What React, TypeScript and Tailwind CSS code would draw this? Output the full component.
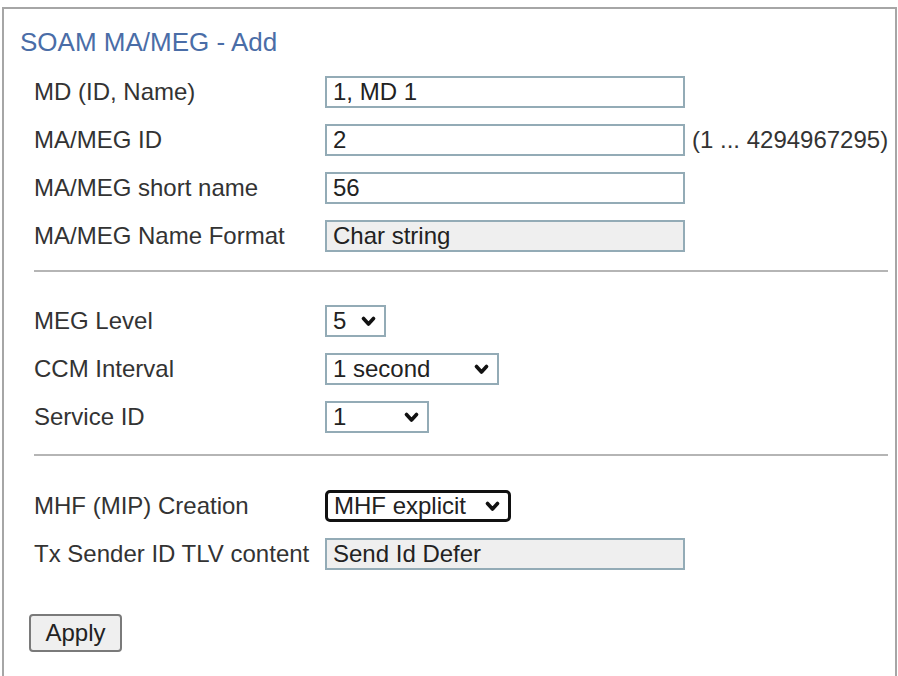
const font = { fontFamily: '"Liberation Sans", Arial, sans-serif' }

function Chevron() {
  return (
    <svg width="15" height="11" viewBox="0 0 15 11" className="shrink-0">
      <polyline points="2.5,2.5 7.5,8 12.5,2.5" fill="none" stroke="#111" strokeWidth="3.6" strokeLinecap="round" strokeLinejoin="round" />
    </svg>
  )
}

function TextBox({ value, disabled }: { value: string; disabled?: boolean }) {
  return (
    <div
      className={`flex h-[32px] w-[360px] shrink-0 items-center border-2 border-[#93abb6] px-[6px] text-[24px] leading-none text-[#222] ${disabled ? "bg-[#efefef]" : "bg-white"}`}
    >
      {value}
    </div>
  )
}

function Select({ value, width, focused }: { value: string; width: string; focused?: boolean }) {
  return (
    <div
      className={`flex h-[32px] items-center justify-between bg-white pl-[6px] pr-[8px] text-[24px] leading-none text-[#222] ${width} ${focused ? "rounded-[5px] border-[3px] border-[#111]" : "border-2 border-[#93abb6]"}`}
    >
      <span className="whitespace-nowrap">{value}</span>
      <Chevron />
    </div>
  )
}

function Row({ label, children }: { label: string; children: React.ReactNode }) {
  return (
    <div className="flex h-[48px] items-center">
      <div className="w-[291px] shrink-0 whitespace-nowrap text-[24px] leading-none text-[#333]">{label}</div>
      {children}
    </div>
  )
}

export default function App() {
  return (
    <div className="h-[676px] w-[898px] overflow-hidden bg-white pl-[2px] pr-[1px] pt-[7px]" style={font}>
      <div className="h-[700px] border-2 border-b-0 border-[#a6a6a6] pl-[30px] pr-[6px]">
        {/* Title */}
        <div className="-ml-[14px] mt-[16px] h-[34px] text-[26px] leading-[34px] text-[#4a6da7]">SOAM MA/MEG - Add</div>

        <div className="mt-[9px]">
          <Row label="MD (ID, Name)">
            <TextBox value="1, MD 1" />
          </Row>
          <Row label="MA/MEG ID">
            <TextBox value="2" />
            <span className="ml-[7px] shrink-0 whitespace-nowrap text-[24px] leading-none text-[#333]">(1 ... 4294967295)</span>
          </Row>
          <Row label="MA/MEG short name">
            <TextBox value="56" />
          </Row>
          <Row label="MA/MEG Name Format">
            <TextBox value="Char string" disabled />
          </Row>
        </div>

        <div className="mt-[10px] h-[2px] w-[854px] bg-[#b5b5b5]" />

        <div className="mt-[25px]">
          <Row label="MEG Level">
            <Select value="5" width="w-[61px]" />
          </Row>
          <Row label="CCM Interval">
            <Select value="1 second" width="w-[174px]" />
          </Row>
          <Row label="Service ID">
            <Select value="1" width="w-[104px]" />
          </Row>
        </div>

        <div className="mt-[13px] h-[2px] w-[854px] bg-[#b5b5b5]" />

        <div className="mt-[26px]">
          <Row label="MHF (MIP) Creation">
            <Select value="MHF explicit" width="w-[186px]" focused />
          </Row>
          <Row label="Tx Sender ID TLV content">
            <TextBox value="Send Id Defer" disabled />
          </Row>
        </div>

        <button className="-ml-[5px] mt-[36px] flex h-[38px] w-[93px] items-center justify-center rounded-[4px] border-2 border-[#7a7a7a] bg-[#efefef] text-[24px] leading-none text-[#222]">
          Apply
        </button>
      </div>
    </div>
  )
}
